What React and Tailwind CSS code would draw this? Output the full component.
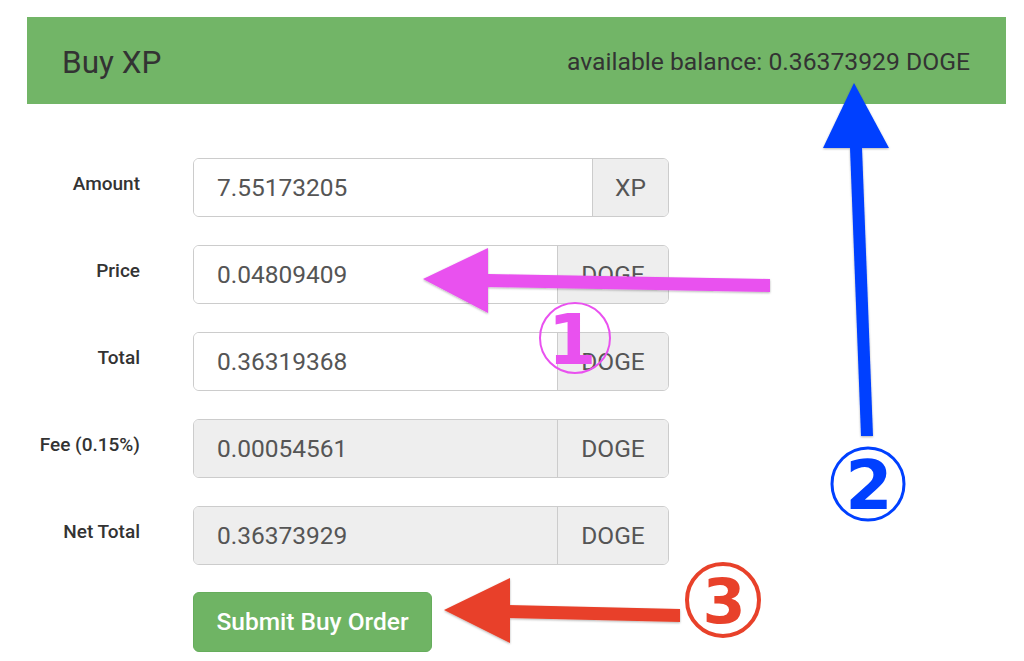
import React from "react";

const rows = [
  { label: "Amount", value: "7.55173205", unit: "XP", unitWidth: "w-[76px]", disabled: false },
  { label: "Price", value: "0.04809409", unit: "DOGE", unitWidth: "w-[111px]", disabled: false },
  { label: "Total", value: "0.36319368", unit: "DOGE", unitWidth: "w-[111px]", disabled: false },
  { label: "Fee (0.15%)", value: "0.00054561", unit: "DOGE", unitWidth: "w-[111px]", disabled: true },
  { label: "Net Total", value: "0.36373929", unit: "DOGE", unitWidth: "w-[111px]", disabled: true },
];

function FieldRow({ row }) {
  return (
    <div className="flex items-start">
      <label className="w-[140px] shrink-0 pt-[14px] text-right text-[19px] leading-[23px] font-medium text-[#333]">
        {row.label}
      </label>
      <div className="ml-[53px] flex h-[59px] w-[476px] overflow-hidden rounded-[6px] border border-[#cccccc]">
        <div
          className={
            "flex flex-1 items-center pl-[23px] pt-[2px] text-[24.5px] text-[#555] " +
            (row.disabled ? "bg-[#eeeeee]" : "bg-white")
          }
        >
          {row.value}
        </div>
        <div
          className={
            "flex items-center justify-center border-l border-[#cccccc] bg-[#eeeeee] pt-[2px] text-[24.5px] text-[#555] " +
            row.unitWidth
          }
        >
          {row.unit}
        </div>
      </div>
    </div>
  );
}

function Annotations() {
  return (
    <svg
      className="pointer-events-none absolute left-0 top-0"
      width="1024"
      height="661"
      viewBox="0 0 1024 661"
    >
      <defs>
        <filter id="sh" x="-10%" y="-10%" width="120%" height="120%">
          <feDropShadow dx="0" dy="1" stdDeviation="1" floodOpacity="0.3" />
        </filter>
      </defs>

      {/* pink arrow + 1 */}
      <g filter="url(#sh)" fill="#e951ef">
        <polygon points="488,274 770,279 770,292 488,287" />
        <polygon points="423,279 488,248 488,313" />
      </g>
      <circle cx="575" cy="338" r="35" fill="none" stroke="#e951ef" strokeWidth="2" />
      <text
        x="572"
        y="364"
        textAnchor="middle"
        fontFamily="'DejaVu Sans', sans-serif"
        fontWeight="900"
        fontSize="70"
        fill="#e951ef"
      >
        1
      </text>

      {/* blue arrow + 2 */}
      <g filter="url(#sh)" fill="#0040ff">
        <polygon points="850,148 862,148 873,436 861,436" />
        <polygon points="854,83 823,148 889,148" />
      </g>
      <circle cx="868" cy="484" r="36" fill="none" stroke="#0040ff" strokeWidth="3" />
      <text
        x="869"
        y="509"
        textAnchor="middle"
        fontFamily="'DejaVu Sans', sans-serif"
        fontWeight="900"
        fontSize="68"
        fill="#0040ff"
      >
        2
      </text>

      {/* red arrow + 3 */}
      <g filter="url(#sh)" fill="#e8412a">
        <polygon points="508,605 680,609 680,622 508,618" />
        <polygon points="444,610 510,578 510,643" />
      </g>
      <circle cx="723" cy="600" r="36" fill="none" stroke="#e8412a" strokeWidth="4" />
      <text
        x="724"
        y="623"
        textAnchor="middle"
        fontFamily="'DejaVu Sans', sans-serif"
        fontWeight="900"
        fontSize="62"
        fill="#e8412a"
      >
        3
      </text>
    </svg>
  );
}

export default function App() {
  return (
    <div
      className="relative h-[661px] w-[1024px] overflow-hidden bg-white"
      style={{ fontFamily: "Roboto, 'Liberation Sans', sans-serif" }}
    >
      <div className="ml-[27px] mt-[17px] flex h-[87px] w-[979px] items-center justify-between bg-[#72b567] pl-[35px] pr-[36px] pt-[4px] text-[#333]">
        <h2 className="text-[31.5px] leading-none">Buy XP</h2>
        <div className="text-[24.7px] leading-none">available balance: 0.36373929 DOGE</div>
      </div>

      <form className="mt-[54px] flex flex-col gap-[28px]">
        {rows.map((row) => (
          <FieldRow key={row.label} row={row} />
        ))}
        <div className="-mt-px ml-[193px]">
          <button
            type="button"
            className="h-[60px] w-[239px] rounded-[6px] border border-[#66ad5c] bg-[#6fb464] text-[24.5px] font-medium text-white"
          >
            Submit Buy Order
          </button>
        </div>
      </form>

      <Annotations />
    </div>
  );
}
